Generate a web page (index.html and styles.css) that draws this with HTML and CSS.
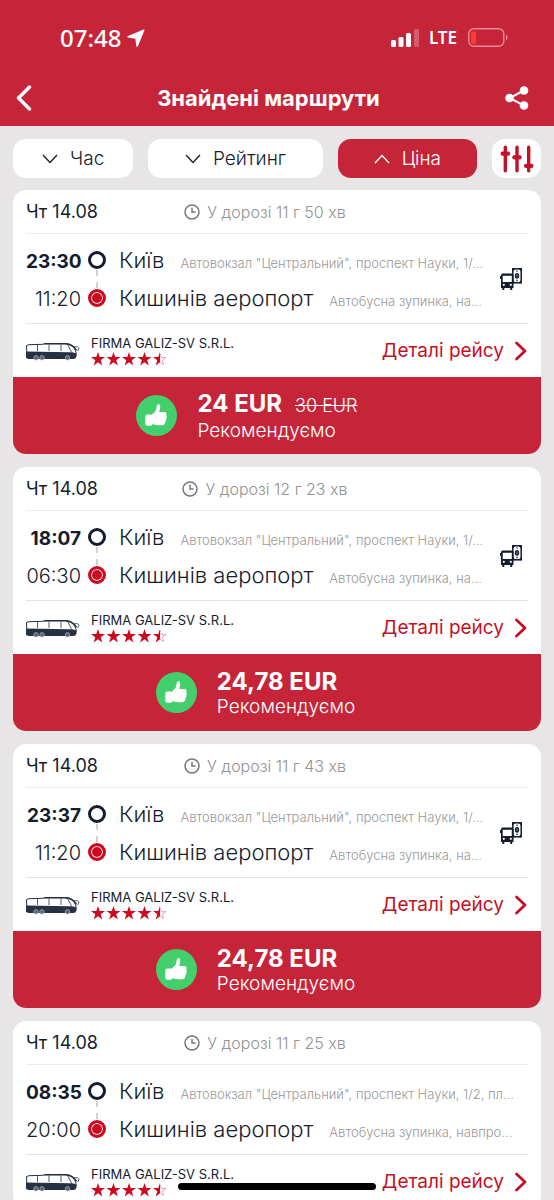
FILE: index.html
```
<!DOCTYPE html>
<html lang="uk">
<head>
<meta charset="utf-8">
<meta name="viewport" content="width=device-width, initial-scale=1">
<title>Знайдені маршрути</title>
<link rel="stylesheet" href="styles.css">
</head>
<body>
<svg class="sprite" aria-hidden="true">
  <symbol id="clock" viewBox="0 0 16 16"><circle cx="8" cy="8" r="7" fill="none" stroke="currentColor" stroke-width="1.5"/><path d="M8 3.800V8h3.600" fill="none" stroke="currentColor" stroke-width="1.500"/></symbol>
  <symbol id="down" viewBox="0 0 16 10"><path d="M1 1l7 7.500L15 1" fill="none" stroke="currentColor" stroke-width="1.300"/></symbol>
  <symbol id="next" viewBox="0 0 14 20"><path d="M2.500 2L11 10l-8.500 8" fill="none" stroke="currentColor" stroke-width="2.800" stroke-linecap="round" stroke-linejoin="round"/></symbol>
  <symbol id="bus" viewBox="0 0 54 18">
    <path d="M0.500 2.500L3 1.700 17 1.300 18.500.6H40c5 .3 8 3 10 8.500L50 14H1z" fill="#fff" stroke="#263142" stroke-width="1"/>
    <path d="M18 .8h21c6 .2 9 2.500 11.500 6.500" fill="none" stroke="#263142" stroke-width="1.500"/>
    <path d="M0 8.500l43 .7c3-.2 5 .3 7.600 1.400L49.500 15.500 47 16H2.500L0 15z" fill="#263142"/>
    <path d="M11.500 1.500V8M23 1.500V8M35 1.500V8M41.500 1.500l4 7.500M48 3.800c4-.5 5.300.2 4.700 2.200l-1 2" fill="none" stroke="#263142" stroke-width=".8"/>
    <g fill="#566171" stroke="#aab0b8" stroke-width=".8"><circle cx="10" cy="14.800" r="2.200"/><circle cx="16" cy="14.800" r="2.200"/><circle cx="41.500" cy="14.800" r="2.200"/></g>
  </symbol>
  <symbol id="pay" viewBox="0 0 22 22">
    <rect x="12.800" y=".8" width="8.400" height="14" fill="#fff" stroke="currentColor" stroke-width="1.500"/>
    <path d="M12.800.8h2.200l-2.200 2.400zM21.200.8H19l2.200 2.400zM21.200 14.800H19l2.200-2.400zM12.800 14.800H15l-2.200-2.400z" fill="currentColor" stroke="currentColor" stroke-width=".6"/>
    <ellipse cx="17" cy="7.800" rx="2.200" ry="2.900" fill="currentColor"/><path d="M17 2.400v1.400M17 11.800v1.400" stroke="currentColor" stroke-width="1.300"/><path d="M17 6.300v3" stroke="#9aa0a8" stroke-width=".9"/>
    <path d="M2.200 5.600h10.300l1 1.200V20h-1.300v2h-2v-2H4.300v2h-2v-2H1V11H0V8h1V6.800z" fill="currentColor"/>
    <path d="M2.700 7.800h9.100v6.200H2.700z" fill="#fff"/><circle cx="3.800" cy="16.800" r="1.100" fill="#fff"/><circle cx="10.800" cy="16.800" r="1.100" fill="#fff"/>
  </symbol>
  <symbol id="thumb" viewBox="0 0 42 42"><circle cx="21" cy="21" r="21" fill="#43d06c"/><rect x="9.500" y="20" width="7.500" height="11.500" rx="2" fill="#fff"/><path d="M16 20.300l4.100-3.800 1.400-6c.4-1.600 2.700-1.500 3.200.3.400 1.900-.1 3.900-.9 6.500h5.200c2.200 0 3 2.300 1.900 3.600 1 .9.800 2.500-.1 3.200.6 1.200.1 2.400-.8 3 .2 1.600-.7 3.900-3 3.900h-5c-2 0-3.200-.8-6-1.200z" fill="#fff"/></symbol>
  <symbol id="stars" viewBox="0 0 76 14">
    <g fill="#cb0a22"><path id="star" d="M7 0l1.700 5.100H14L9.700 8.300l1.600 5.200L7 10.300l-4.300 3.200 1.600-5.200L0 5.100h5.300z"/><use href="#star" x="15.500"/><use href="#star" x="31"/><use href="#star" x="46.500"/><path d="M69 0v10.300l-4.300 3.200 1.600-5.200L62 5.100h5.300z"/></g>
    <path d="M69 1.500l1.300 4.100H75l-3.800 2.500 1.400 4.400L69 9.900" fill="none" stroke="#d9606e" stroke-width=".8" stroke-dasharray="1.500 .8"/>
  </symbol>
</svg>
<div class="screen">
  <header class="top">
    <div class="status">
      <div class="clock-group"><span class="now">07:48</span><svg class="arrow" viewBox="0 0 18 18" aria-hidden="true"><path d="M16.500.6c.8-.3 1.200.1.900.9L11 17c-.5 1.200-1.500 1.100-1.700-.1L8.300 9.700 1.200 8.600C0 8.400-.1 7.500 1 7z" fill="#fff"/></svg></div>
      <div class="signals">
        <svg class="bars" viewBox="0 0 28 18" aria-hidden="true"><g fill="#fff"><rect x="0" y="11" width="5" height="7" rx="1.500"/><rect x="7.500" y="8" width="5" height="10" rx="1.500"/><rect x="15" y="4" width="5" height="14" rx="1.500"/><rect x="23" y="0" width="5" height="18" rx="1.500" opacity=".25"/></g></svg>
        <span class="net">LTE</span>
        <svg class="battery" viewBox="0 0 40 20" aria-hidden="true"><rect x=".8" y=".8" width="35" height="17.500" rx="5" fill="none" stroke="#e58b98" stroke-width="1.400"/><rect x="3" y="3.500" width="5" height="12" rx="1.500" fill="#ff3b30"/><path d="M38 6.500c2 1 2 5 0 6z" fill="#e58b98"/></svg>
      </div>
    </div>
    <div class="nav">
      <button class="icon-btn" aria-label="Назад"><svg class="back" viewBox="0 0 16 26"><path d="M13.500 2L2.500 13l11 11" fill="none" stroke="#fff" stroke-width="3.400" stroke-linecap="round" stroke-linejoin="round"/></svg></button>
      <h1>Знайдені маршрути</h1>
      <button class="icon-btn" aria-label="Поділитися"><svg class="share" viewBox="0 0 24 24"><path d="M19 4.500L4.500 12 19 19.500" fill="none" stroke="#fff" stroke-width="2"/><g fill="#fff"><circle cx="19" cy="4.500" r="4.300"/><circle cx="4.500" cy="12" r="4.300"/><circle cx="19" cy="19.500" r="4.300"/></g></svg></button>
    </div>
  </header>
  <div class="filters">
    <button class="filter time-filter"><svg><use href="#down"/></svg>Час</button>
    <button class="filter rating-filter"><svg><use href="#down"/></svg>Рейтинг</button>
    <button class="filter price-filter active"><svg class="up"><use href="#down"/></svg>Ціна</button>
    <button class="tune" aria-label="Фільтри"><svg viewBox="0 0 32 26"><path d="M5 2v22M16 2v22M27 2v22" stroke="#c41029" stroke-width="3.200" stroke-linecap="round"/><path d="M2.500 8h5M13.500 11.500h5M24.500 19.500h5" stroke="#c41029" stroke-width="4" stroke-linecap="round"/></svg></button>
  </div>
  <main class="list">
    <article class="card">
      <div class="head"><span class="date">Чт 14.08</span><span class="duration"><svg><use href="#clock"/></svg>У дорозі 11 г 50 хв</span></div>
      <div class="route">
        <div class="stops">
          <div class="stop"><b class="time">23:30</b><i class="dot"></i><span class="city">Київ</span><span class="place">Автовокзал "Центральний", проспект Науки, 1/...</span></div>
          <div class="stop"><span class="time">11:20</span><i class="dot end"></i><span class="city">Кишинів аеропорт</span><span class="place">Автобусна зупинка, на...</span></div>
        </div>
        <svg class="pay"><use href="#pay"/></svg>
      </div>
      <div class="carrier"><svg class="bus"><use href="#bus"/></svg><div class="firm"><span>FIRMA GALIZ-SV S.R.L.</span><svg class="stars" role="img" aria-label="4,5"><use href="#stars"/></svg></div><a class="details" href="#">Деталі рейсу<svg><use href="#next"/></svg></a></div>
      <button class="offer"><svg class="thumb"><use href="#thumb"/></svg><span class="offer-text"><span class="prices"><b>24 EUR</b><s>30 EUR</s></span><span class="note">Рекомендуємо</span></span></button>
    </article>
    <article class="card">
      <div class="head"><span class="date">Чт 14.08</span><span class="duration"><svg><use href="#clock"/></svg>У дорозі 12 г 23 хв</span></div>
      <div class="route">
        <div class="stops">
          <div class="stop"><b class="time">18:07</b><i class="dot"></i><span class="city">Київ</span><span class="place">Автовокзал "Центральний", проспект Науки, 1/...</span></div>
          <div class="stop"><span class="time">06:30</span><i class="dot end"></i><span class="city">Кишинів аеропорт</span><span class="place">Автобусна зупинка, на...</span></div>
        </div>
        <svg class="pay"><use href="#pay"/></svg>
      </div>
      <div class="carrier"><svg class="bus"><use href="#bus"/></svg><div class="firm"><span>FIRMA GALIZ-SV S.R.L.</span><svg class="stars" role="img" aria-label="4,5"><use href="#stars"/></svg></div><a class="details" href="#">Деталі рейсу<svg><use href="#next"/></svg></a></div>
      <button class="offer"><svg class="thumb"><use href="#thumb"/></svg><span class="offer-text"><span class="prices"><b>24,78 EUR</b></span><span class="note">Рекомендуємо</span></span></button>
    </article>
    <article class="card">
      <div class="head"><span class="date">Чт 14.08</span><span class="duration"><svg><use href="#clock"/></svg>У дорозі 11 г 43 хв</span></div>
      <div class="route">
        <div class="stops">
          <div class="stop"><b class="time">23:37</b><i class="dot"></i><span class="city">Київ</span><span class="place">Автовокзал "Центральний", проспект Науки, 1/...</span></div>
          <div class="stop"><span class="time">11:20</span><i class="dot end"></i><span class="city">Кишинів аеропорт</span><span class="place">Автобусна зупинка, на...</span></div>
        </div>
        <svg class="pay"><use href="#pay"/></svg>
      </div>
      <div class="carrier"><svg class="bus"><use href="#bus"/></svg><div class="firm"><span>FIRMA GALIZ-SV S.R.L.</span><svg class="stars" role="img" aria-label="4,5"><use href="#stars"/></svg></div><a class="details" href="#">Деталі рейсу<svg><use href="#next"/></svg></a></div>
      <button class="offer"><svg class="thumb"><use href="#thumb"/></svg><span class="offer-text"><span class="prices"><b>24,78 EUR</b></span><span class="note">Рекомендуємо</span></span></button>
    </article>
    <article class="card">
      <div class="head"><span class="date">Чт 14.08</span><span class="duration"><svg><use href="#clock"/></svg>У дорозі 11 г 25 хв</span></div>
      <div class="route">
        <div class="stops">
          <div class="stop"><b class="time">08:35</b><i class="dot"></i><span class="city">Київ</span><span class="place">Автовокзал "Центральний", проспект Науки, 1/2, пл...</span></div>
          <div class="stop"><span class="time">20:00</span><i class="dot end"></i><span class="city">Кишинів аеропорт</span><span class="place">Автобусна зупинка, навпро...</span></div>
        </div>
      </div>
      <div class="carrier"><svg class="bus"><use href="#bus"/></svg><div class="firm"><span>FIRMA GALIZ-SV S.R.L.</span><svg class="stars" role="img" aria-label="4,5"><use href="#stars"/></svg></div><a class="details" href="#">Деталі рейсу<svg><use href="#next"/></svg></a></div>
    </article>
  </main>
  <div class="home-bar"></div>
</div>
</body>
</html>
```
FILE: styles.css
```
* { box-sizing: border-box; }
body { margin: 0; background: #e7e5e6; color: #141c2e; font-family: Inter, "Noto Sans", sans-serif; font-weight: 300; }
button { border: 0; padding: 0; margin: 0; background: none; font: inherit; color: inherit; cursor: pointer; }
svg { display: block; flex: none; }
.sprite { position: absolute; width: 0; height: 0; }
.screen { position: relative; display: flex; flex-direction: column; height: 100vh; overflow: hidden; }

.top { flex: none; background: #c62539; color: #fff; }
.status { display: flex; justify-content: space-between; align-items: center; height: 70px; padding: 6px 46px 0 60px; }
.clock-group, .signals { display: flex; align-items: center; }
.clock-group { gap: 6px; }
.now { font: 500 24px/28px "Noto Sans", sans-serif; }
.arrow { width: 18px; height: 18px; }
.bars { width: 28px; height: 18px; }
.net { margin: 0 11px 0 10px; font: 600 17px/24px "Noto Sans", sans-serif; }
.battery { width: 40px; height: 20px; }
.nav { display: flex; align-items: center; justify-content: space-between; height: 56px; padding: 0 25px 0 16px; }
.back { width: 16px; height: 26px; }
.share { width: 24px; height: 24px; }
h1 { margin: 0; font-size: 22px; line-height: 26px; font-weight: 700; }

.filters { flex: none; display: flex; gap: 15px; padding: 13px 13px 12px; }
.filter { display: flex; align-items: center; justify-content: center; gap: 12px; height: 39px; border-radius: 13px; background: #fff; font-size: 19px; }
.filter svg { width: 16px; height: 10px; }
.filter .up { transform: rotate(180deg); }
.time-filter { flex: 120; }
.rating-filter { flex: 174; }
.price-filter { flex: 139; }
.active { background: #c62539; color: #fff; }
.tune { display: grid; place-items: center; width: 49px; height: 39px; border-radius: 13px; background: #fff; }
.tune svg { width: 34px; height: 28px; }

.list { flex: 1; min-height: 0; overflow: hidden; display: flex; flex-direction: column; gap: 13px; padding: 0 13px; }
.card { flex: none; border-radius: 13px; background: #fff; overflow: hidden; }
.head { display: grid; grid-template-columns: 126px 1fr 150px; align-items: center; height: 44px; margin: 0 13px; border-bottom: 1px solid #ebebee; }
.date { font-size: 18px; font-weight: 400; }
.duration { display: flex; align-items: center; justify-content: center; gap: 7px; color: #929292; font-size: 16px; white-space: nowrap; }
.duration svg { width: 16px; height: 16px; color: #777; }
.route { display: flex; align-items: center; height: 90px; margin: 0 13px; border-bottom: 1px solid #e2e2e5; }
.stops { flex: 1; min-width: 0; }
.stop { display: flex; align-items: baseline; height: 38px; line-height: 38px; white-space: nowrap; }
.time { flex: none; width: 55px; text-align: right; font-size: 20px; }
b.time { font-size: 19px; font-weight: 700; }
.dot { position: relative; align-self: center; flex: none; width: 18px; height: 18px; margin: 0 13px 0 7px; border: 3px solid #141c2e; border-radius: 50%; }
.dot::after { content: ""; position: absolute; top: 16px; left: 5px; height: 18px; border-left: 2px dashed #d2d2d5; }
.dot.end { border-color: #cb0a22; background: #cb0a22; box-shadow: inset 0 0 0 1px #fff; }
.dot.end::after { display: none; }
.city { flex: none; font-size: 22px; }
.place { margin-left: 16px; overflow: hidden; text-overflow: ellipsis; color: #999; font-size: 13px; }
.pay { width: 22px; height: 22px; margin: 0 6px 0 8px; }
.carrier { display: flex; align-items: center; height: 53px; margin: 0 13px; }
.bus { width: 54px; height: 18px; margin: 3px 11px 0 0; }
.firm { display: grid; padding-bottom: 2px; font-size: 13px; line-height: 18px; font-weight: 400; }
.stars { width: 76px; height: 14px; }
.details { display: flex; align-items: center; gap: 10px; margin-left: auto; color: #c40f27; font-size: 19px; font-weight: 400; text-decoration: none; }
.details svg { width: 14px; height: 20px; }
.offer { display: flex; align-items: center; justify-content: center; gap: 20px; width: 100%; height: 77px; background: #c62539; color: #fff; text-align: left; }
.thumb { width: 41px; height: 41px; }
.offer-text { display: grid; padding: 2px 43px 0 0; line-height: 25px; }
.prices { display: flex; align-items: baseline; font-size: 24px; }
.prices b { font-weight: 700; }
.prices s { margin: 0 17px 0 13px; font-size: 18px; }
.note { font-size: 19px; }
.home-bar { position: absolute; bottom: 10px; left: 50%; width: 198px; height: 7px; border-radius: 4px; background: #000; transform: translateX(-50%); }
```
